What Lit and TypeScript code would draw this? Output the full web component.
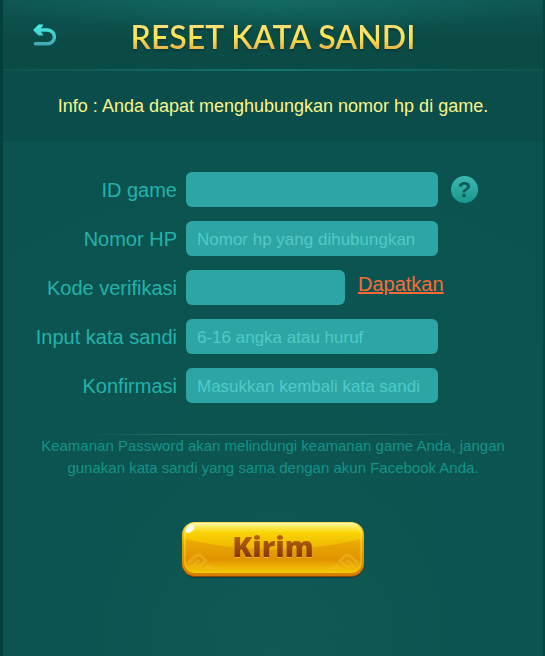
import { LitElement, css, html, nothing, svg } from "lit";
import { customElement, property } from "lit/decorators.js";

interface Field {
  id: string;
  label: string;
  type: string;
  placeholder: string;
  extra?: "help" | "code";
}

const FIELDS: Field[] = [
  { id: "game-id", label: "ID game", type: "text", placeholder: "", extra: "help" },
  { id: "phone", label: "Nomor HP", type: "tel", placeholder: "Nomor hp yang dihubungkan" },
  { id: "code", label: "Kode verifikasi", type: "text", placeholder: "", extra: "code" },
  { id: "password", label: "Input kata sandi", type: "password", placeholder: "6-16 angka atau huruf" },
  { id: "confirm", label: "Konfirmasi", type: "password", placeholder: "Masukkan kembali kata sandi" },
];

@customElement("gold-button")
export class GoldButton extends LitElement {
  @property() label = "";

  static styles = css`
    :host {
      display: inline-block;
    }
    .gold {
      position: relative;
      display: flex;
      align-items: center;
      justify-content: center;
      width: 182px;
      height: 56px;
      padding: 0 0 8px;
      border: 0;
      background: none;
      cursor: pointer;
      font: 900 29px/36px "Noto Sans", "Open Sans", sans-serif;
    }
    .plate {
      position: absolute;
      inset: 0;
      width: 100%;
      height: 100%;
    }
    .text {
      position: relative;
      color: transparent;
      background: linear-gradient(#b9640f 20%, #85390a 80%);
      background-clip: text;
      -webkit-background-clip: text;
      filter: drop-shadow(0 1px 0 #f6b21c);
    }
  `;

  private swirl() {
    return svg`<path d="M6 41 L14 34 Q17 32 19 34 L24 39 L18 44 H11 L15 39 H18" />
      <path d="M22 48 L27 44 L35 48" />`;
  }

  render() {
    return html`<button class="gold" type="submit">
      <svg class="plate" viewBox="0 0 182 56" aria-hidden="true">
        <defs>
          <linearGradient id="face" x1="0" y1="0" x2="0" y2="1">
            <stop offset="0" stop-color="#fff6a8" />
            <stop offset="0.07" stop-color="#fdea5c" />
            <stop offset="0.2" stop-color="#f9d303" />
            <stop offset="0.5" stop-color="#efb502" />
            <stop offset="0.75" stop-color="#e59a02" />
            <stop offset="1" stop-color="#f5c803" />
          </linearGradient>
          <linearGradient id="shade" x1="0" y1="0" x2="0" y2="1">
            <stop offset="0" stop-color="#e8a003" stop-opacity="0.6" />
            <stop offset="0.6" stop-color="#df9000" stop-opacity="0.8" />
            <stop offset="1" stop-color="#f3c303" stop-opacity="0" />
          </linearGradient>
          <linearGradient id="rim" x1="0" y1="0" x2="0" y2="1">
            <stop offset="0" stop-color="#fff8c0" />
            <stop offset="0.35" stop-color="#ffe93a" />
            <stop offset="1" stop-color="#f4cd04" />
          </linearGradient>
          <linearGradient id="edge" x1="0" y1="0" x2="0" y2="1">
            <stop offset="0" stop-color="#fbe04a" />
            <stop offset="0.4" stop-color="#e5a100" />
            <stop offset="1" stop-color="#d77d00" />
          </linearGradient>
        </defs>
        <rect x="1" y="3" width="180" height="53" rx="12" fill="#073c38" opacity="0.7" />
        <rect x="0" y="1" width="182" height="54" rx="13" fill="#8a4a05" />
        <rect x="0" y="0" width="182" height="54" rx="13" fill="url(#edge)" />
        <rect x="2" y="1" width="178" height="50" rx="11" fill="url(#face)" />
        <path d="M3 17 Q91 38 179 17 V40 Q179 50 169 50 H13 Q3 50 3 40 Z" fill="url(#shade)" />
        <rect x="3" y="2" width="176" height="48" rx="10" fill="none" stroke="url(#rim)" stroke-width="2" opacity="0.35" />
        <g fill="none" stroke="#f5bd2c" stroke-width="3" opacity="0.45">
          ${this.swirl()}
          <g transform="translate(182 0) scale(-1 1)">${this.swirl()}</g>
        </g>
        <ellipse cx="8" cy="7" rx="5" ry="3" transform="rotate(-40 8 7)" fill="#fff" />
      </svg>
      <span class="text">${this.label}</span>
    </button>`;
  }
}

@customElement("app-root")
export class AppRoot extends LitElement {
  static styles = css`
    :host {
      display: block;
      box-sizing: border-box;
      min-height: 100vh;
      border-left: 3px solid #033f3b;
      border-right: 2px solid #05443f;
      font-family: "Liberation Sans", Arial, sans-serif;
      background:
        radial-gradient(ellipse 35% 30% at 50% 100%, #115954, transparent),
        radial-gradient(ellipse 90% 60% at 50% 80%, #0d5551, transparent),
        #0b5350;
    }
    * {
      box-sizing: border-box;
    }
    .header {
      display: grid;
      grid-template-columns: 82px 1fr 82px;
      align-items: center;
      height: 71px;
      border-bottom: 2px solid;
      border-image: linear-gradient(90deg, #0f524e, #14746e 50%, #0f524e) 1;
      background:
        radial-gradient(ellipse 55% 45% at 50% 0, #136a64, transparent),
        linear-gradient(#0e5551, #0b4b46 60%);
    }
    .back {
      justify-self: center;
      display: grid;
      padding: 0;
      border: 0;
      background: none;
      cursor: pointer;
    }
    .title {
      margin: 0;
      padding-top: 4px;
      text-align: center;
      white-space: nowrap;
      font: 600 32px/40px Lato, sans-serif;
      color: transparent;
      background: linear-gradient(#fbdc7c 25%, #fde651 55%, #eab848 80%);
      background-clip: text;
      -webkit-background-clip: text;
      filter: drop-shadow(0 2px 1px #083a36);
    }
    .info {
      margin: 0;
      padding: 24px 16px 25px;
      text-align: center;
      font-size: 18px;
      line-height: 22px;
      color: #f8f58c;
      background: #0a4d4b;
    }
    .form {
      padding-top: 30px;
    }
    .fields {
      display: grid;
      gap: 15px;
    }
    .row {
      display: grid;
      grid-template-columns: 174fr 9px 252fr 13px 92fr;
      align-items: center;
      height: 34px;
    }
    .label {
      text-align: right;
      white-space: nowrap;
      font-size: 20px;
      line-height: 24px;
      color: #22b3ac;
    }
    .input {
      grid-column: 3;
      width: 100%;
      min-width: 0;
      height: 35px;
      padding: 2px 11px 0;
      border: 0;
      border-radius: 6px;
      outline: none;
      font: 17px/20px "Liberation Sans", Arial, sans-serif;
      color: #eafffd;
      background: #2da5a4;
    }
    .input::placeholder {
      color: #50cac8;
      opacity: 1;
    }
    .input:focus-visible {
      box-shadow: 0 0 0 2px #50cac8;
    }
    .code {
      grid-column: 3 / -1;
      display: flex;
      gap: 13px;
    }
    .short {
      flex: 0 1 159px;
    }
    .get {
      font-size: 20px;
      line-height: 28px;
      color: #fb6a35;
    }
    .help {
      grid-column: 5;
      width: 27px;
      height: 27px;
      padding: 0;
      border: 0;
      border-radius: 50%;
      font: 700 22px/27px "Liberation Sans", Arial, sans-serif;
      color: #0c5a55;
      background: linear-gradient(#3db9b2, #18978f);
      cursor: pointer;
    }
    .note {
      margin: 32px 0 0;
      padding: 0 30px;
      border-top: 1px solid;
      border-image: linear-gradient(90deg, transparent 15%, #29716a 35%, #29716a 65%, transparent 85%) 1;
      text-align: center;
      font-size: 15px;
      line-height: 22px;
      color: #139389;
    }
    .actions {
      display: flex;
      justify-content: center;
      padding: 43px 0 32px;
    }
  `;

  private renderInput(f: Field) {
    return html`<input
      class="input ${f.extra === "code" ? "short" : ""}"
      id=${f.id}
      name=${f.id}
      type=${f.type}
      placeholder=${f.placeholder}
      autocomplete="off"
    />`;
  }

  private renderRow(f: Field) {
    return html`<div class="row">
      <label class="label" for=${f.id}>${f.label}</label>
      ${f.extra === "code"
        ? html`<div class="code">${this.renderInput(f)}<a class="get" href="#code">Dapatkan</a></div>`
        : this.renderInput(f)}
      ${f.extra === "help" ? html`<button class="help" type="button">?</button>` : nothing}
    </div>`;
  }

  render() {
    return html`
      <header class="header">
        <button class="back" type="button" aria-label="Kembali">
          <svg width="24" height="24" viewBox="0 0 24 24" aria-hidden="true">
            <defs>
              <linearGradient id="ice" gradientUnits="userSpaceOnUse" x1="0" y1="2" x2="0" y2="23">
                <stop offset="0" stop-color="#46efe0" />
                <stop offset="0.4" stop-color="#44d3d2" />
                <stop offset="1" stop-color="#43a2b5" />
              </linearGradient>
            </defs>
            <path
              d="M5 7H15.5A6.9 6.9 0 0 1 15.5 20.8H3.5"
              fill="none"
              stroke="url(#ice)"
              stroke-width="3.4"
              stroke-linecap="round"
            />
            <path d="M1 7L6.5 1.6H11.5L8 7L11.5 12.4H6.5Z" fill="url(#ice)" />
          </svg>
        </button>
        <h1 class="title">RESET KATA SANDI</h1>
      </header>
      <p class="info">Info : Anda dapat menghubungkan nomor hp di game.</p>
      <form class="form" @submit=${(e: Event) => e.preventDefault()}>
        <div class="fields">${FIELDS.map((f) => this.renderRow(f))}</div>
        <p class="note">
          Keamanan Password akan melindungi keamanan game Anda, jangan gunakan kata sandi yang sama dengan akun
          Facebook Anda.
        </p>
        <div class="actions"><gold-button label="Kirim"></gold-button></div>
      </form>
    `;
  }
}
